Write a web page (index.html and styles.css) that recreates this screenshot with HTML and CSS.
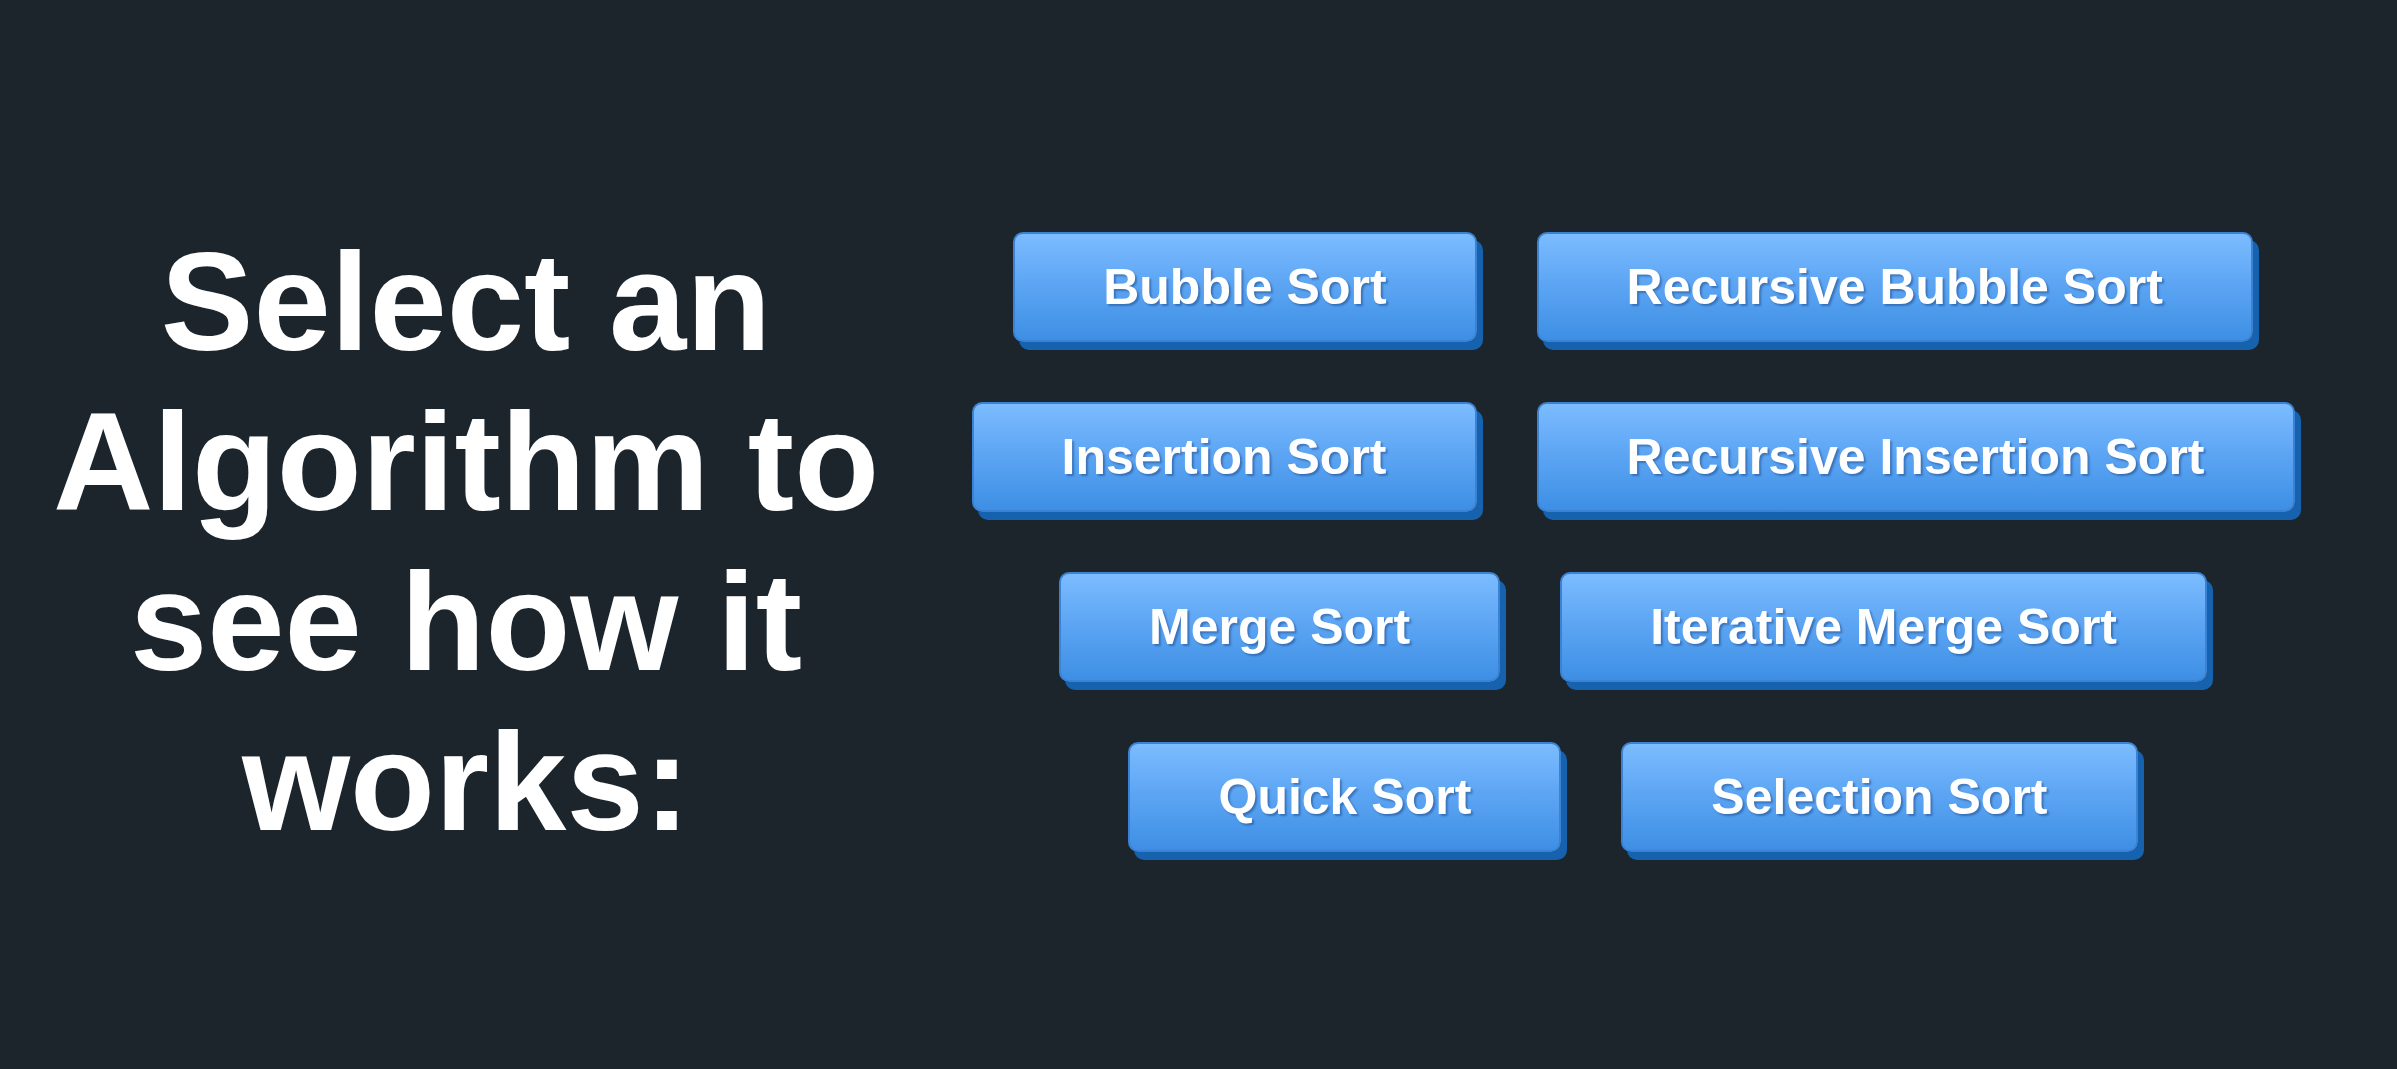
FILE: index.html
```html
<!DOCTYPE html>
<html lang="en">
<head>
<meta charset="utf-8">
<title>Sorting Visualizer</title>
<link rel="stylesheet" href="styles.css">
</head>
<body>
<main class="page">
  <section class="intro">
    <h1 class="title">Select an Algorithm to see how it works:</h1>
  </section>
  <section class="choices">
    <div class="row">
      <button class="algo">Bubble Sort</button>
      <button class="algo">Recursive Bubble Sort</button>
    </div>
    <div class="row">
      <button class="algo">Insertion Sort</button>
      <button class="algo">Recursive Insertion Sort</button>
    </div>
    <div class="row">
      <button class="algo">Merge Sort</button>
      <button class="algo">Iterative Merge Sort</button>
    </div>
    <div class="row">
      <button class="algo">Quick Sort</button>
      <button class="algo">Selection Sort</button>
    </div>
  </section>
</main>
</body>
</html>
```

FILE: styles.css
```css
html, body {
  margin: 0;
  padding: 0;
  background: #1c252c;
}

body {
  font-family: "Liberation Sans", Arial, sans-serif;
  color: #ffffff;
}

.page {
  box-sizing: border-box;
  min-height: 1069px;
  padding-top: 14px;
  display: flex;
  align-items: center;
}

.intro {
  width: 932px;
  flex: 0 0 932px;
  display: flex;
  justify-content: center;
}

.title {
  margin: 0;
  width: 900px;
  font-size: 139px;
  line-height: 160px;
  font-weight: 700;
  text-align: center;
}

.choices {
  flex: 0 0 1402px;
  width: 1402px;
  display: flex;
  flex-direction: column;
  gap: 60px;
}

.row {
  display: flex;
  justify-content: center;
  gap: 60px;
}

.algo {
  font-family: "Liberation Sans", Arial, sans-serif;
  font-size: 50px;
  font-weight: 700;
  line-height: 58px;
  color: #ffffff;
  padding: 24px 88px;
  border: 2px solid #3b82d4;
  border-radius: 10px;
  background: linear-gradient(to bottom, #7cbcff 0%, #5ea6f4 45%, #3d8fe5 100%);
  box-shadow: 6px 8px 0 #1762ae;
  text-shadow: 2px 2px 2px rgba(20, 60, 120, 0.45);
  white-space: nowrap;
  cursor: pointer;
}
```
